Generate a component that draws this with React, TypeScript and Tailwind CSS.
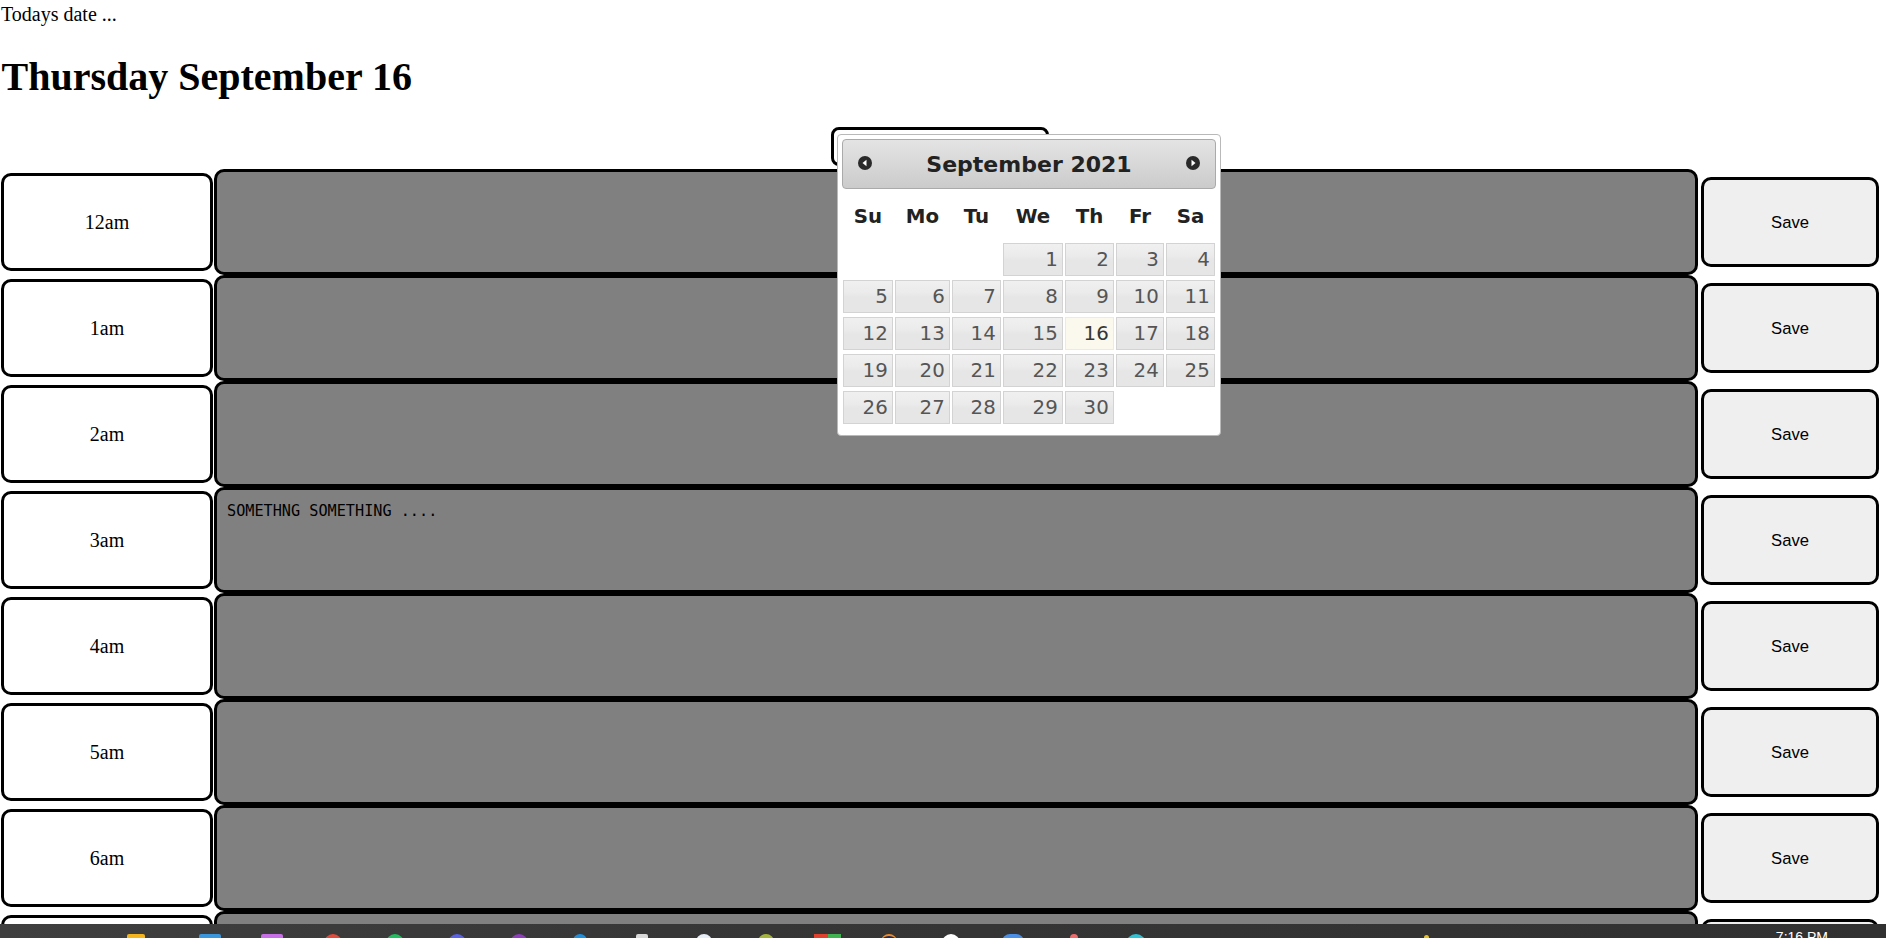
import React from "react";

const hours = [
  "12am", "1am", "2am", "3am", "4am", "5am", "6am", "7am", "8am", "9am", "10am", "11am",
  "12pm", "1pm", "2pm", "3pm", "4pm", "5pm", "6pm", "7pm", "8pm", "9pm", "10pm", "11pm",
];

const dayNames = ["Su", "Mo", "Tu", "We", "Th", "Fr", "Sa"];
const days: (number | null)[] = [
  null, null, null, 1, 2, 3, 4,
  5, 6, 7, 8, 9, 10, 11,
  12, 13, 14, 15, 16, 17, 18,
  19, 20, 21, 22, 23, 24, 25,
  26, 27, 28, 29, 30, null, null,
];

const taskIcons = [
  "w-[22px] h-[20px] rounded-[2px] bg-[#3a96dd]",
  "w-[22px] h-[20px] rounded-[2px] bg-[#c86ee6]",
  "w-[18px] h-[18px] rounded-full bg-[#e24a3b]",
  "w-[18px] h-[18px] rounded-full bg-[#1fbf5f]",
  "w-[18px] h-[18px] rounded-full bg-[#5a63e8]",
  "w-[18px] h-[18px] rounded-full bg-[#8f3dbd]",
  "w-[14px] h-[18px] rounded-t-full bg-[#1f8fdc]",
  "w-[12px] h-[18px] rounded-t-[2px] bg-[#d9d9d9]",
  "w-[16px] h-[18px] rounded-full bg-[#e8eef8]",
  "w-[16px] h-[18px] rounded-t-full bg-[#a5b53a]",
  "w-[27px] h-[18px] bg-[linear-gradient(90deg,#e0412f_50%,#3fb34f_50%)]",
  "w-[16px] h-[18px] rounded-full border-t-2 border-[#f08a24] bg-[#1f2a5a]",
  "w-[18px] h-[18px] rounded-full bg-white",
  "w-[22px] h-[18px] rounded-t-[8px] bg-[#4a90e8]",
  "w-[8px] h-[18px] rounded-t-full bg-[#f06a6a]",
  "w-[20px] h-[20px] rounded-full bg-[#2ec4d6]",
];

function CircleTriangle({ dir }: { dir: "w" | "e" }) {
  return (
    <svg width="16" height="16" viewBox="0 0 16 16">
      <circle cx="8" cy="8" r="7" fill="#2a2a2a" />
      {dir === "w" ? (
        <polygon points="5.5,8 9.5,4.8 9.5,11.2" fill="#ffffff" />
      ) : (
        <polygon points="10.5,8 6.5,4.8 6.5,11.2" fill="#ffffff" />
      )}
    </svg>
  );
}

function Datepicker() {
  return (
    <div className="absolute left-[837px] top-[134px] w-[384px] rounded-[4px] border border-[#b9b9b9] bg-white px-[4px] pt-[4.4px] pb-[8.8px] font-['DejaVu_Sans','Verdana',sans-serif] text-[#222222]">
      <div className="relative flex h-[50px] items-center justify-center rounded-[4px] border border-[#aaaaaa] bg-[linear-gradient(#e4e4e4,#cbcbcb)] text-[22px] font-bold">
        <span className="absolute left-[14px] top-[15px] block h-[16px] w-[16px]">
          <CircleTriangle dir="w" />
        </span>
        <span className="pt-[1px]">September 2021</span>
        <span className="absolute right-[14px] top-[15px] block h-[16px] w-[16px]">
          <CircleTriangle dir="e" />
        </span>
      </div>
      <div className="grid grid-cols-[52px_57px_51px_62px_51px_50px_51px] text-[19.8px]">
        {dayNames.map((d) => (
          <div key={d} className="flex h-[51.4px] items-center justify-center pt-[2px] font-bold leading-[23px]">
            {d}
          </div>
        ))}
        {days.map((d, i) => (
          <div key={i} className="h-[37px] px-[1.25px] py-[2px]">
            {d === null ? null : d === 16 ? (
              <div className="flex h-[33px] items-center justify-end border border-[#fcefa1] bg-[#fbf9ee] pr-[4px] leading-[23px] text-[#363636]">
                {d}
              </div>
            ) : (
              <div className="flex h-[33px] items-center justify-end border border-[#d3d3d3] bg-[linear-gradient(#f0f0f0,#ebebeb_38%,#e6e6e6_52%,#e6e6e6)] pr-[4px] leading-[23px] text-[#555555]">
                {d}
              </div>
            )}
          </div>
        ))}
      </div>
    </div>
  );
}

function Taskbar() {
  return (
    <div className="absolute bottom-0 left-0 flex h-[14px] w-full overflow-hidden bg-[linear-gradient(90deg,#3f3f3f,#363636_40%,#313131)]">
      <div className="ml-[127px] pt-[10px]">
        <div className="h-[16px] w-[18px] rounded-t-[2px] bg-[#f3b51b]" />
      </div>
      <div className="ml-[34px] flex">
        {taskIcons.map((c, i) => (
          <div key={i} className="flex w-[61.75px] justify-center pt-[10px]">
            <div className={c} />
          </div>
        ))}
      </div>
      <div className="ml-[257px] pt-[11px]">
        <div className="h-[6px] w-[5px] rounded-full bg-[#e8c020]" />
      </div>
      <div className="ml-auto mr-[58px] pt-[5px] font-['Liberation_Sans','Arial',sans-serif] text-[14px] leading-[16px] text-white">
        7:16 PM
      </div>
    </div>
  );
}

export default function App() {
  return (
    <div className="relative h-[938px] w-full overflow-hidden bg-white font-['Liberation_Serif','Times_New_Roman',serif] text-black">
      <div className="pt-[2.5px]">
        <p className="m-0 pl-[1px] text-[20px] leading-[23px]">Todays date ...</p>
        <h1 className="m-0 mt-[28.5px] pl-[1.5px] text-[40px] font-bold leading-[46px]">Thursday September 16</h1>
        <div className="mt-[27px] flex justify-center">
          <input
            type="text"
            className="mr-[6px] h-[39px] w-[218px] rounded-[8px] border-[3px] border-black bg-white outline-none"
          />
        </div>
        <div className="mt-[3px]">
          {hours.map((h) => (
            <div key={h} className="flex h-[106px] items-center">
              <div className="ml-px flex h-[98px] w-[212px] shrink-0 items-center justify-center rounded-[10px] border-[3px] border-black bg-white text-[20px]">
                {h}
              </div>
              <textarea
                className="ml-px h-[106px] w-[1484px] shrink-0 resize-none rounded-[10px] border-[3px] border-black bg-[#808080] px-[10px] pt-[12px] pb-[8px] font-['DejaVu_Sans_Mono','Consolas',monospace] text-[15.2px] leading-[19px] text-black outline-none"
                defaultValue={h === "3am" ? "SOMETHNG SOMETHING ...." : ""}
              />
              <button className="ml-[3px] h-[90px] w-[178px] shrink-0 rounded-[10px] border-[3px] border-black bg-[#efefef] font-['Liberation_Sans','Arial',sans-serif] text-[16.67px] text-black">
                Save
              </button>
            </div>
          ))}
        </div>
      </div>
      <Datepicker />
      <Taskbar />
    </div>
  );
}
